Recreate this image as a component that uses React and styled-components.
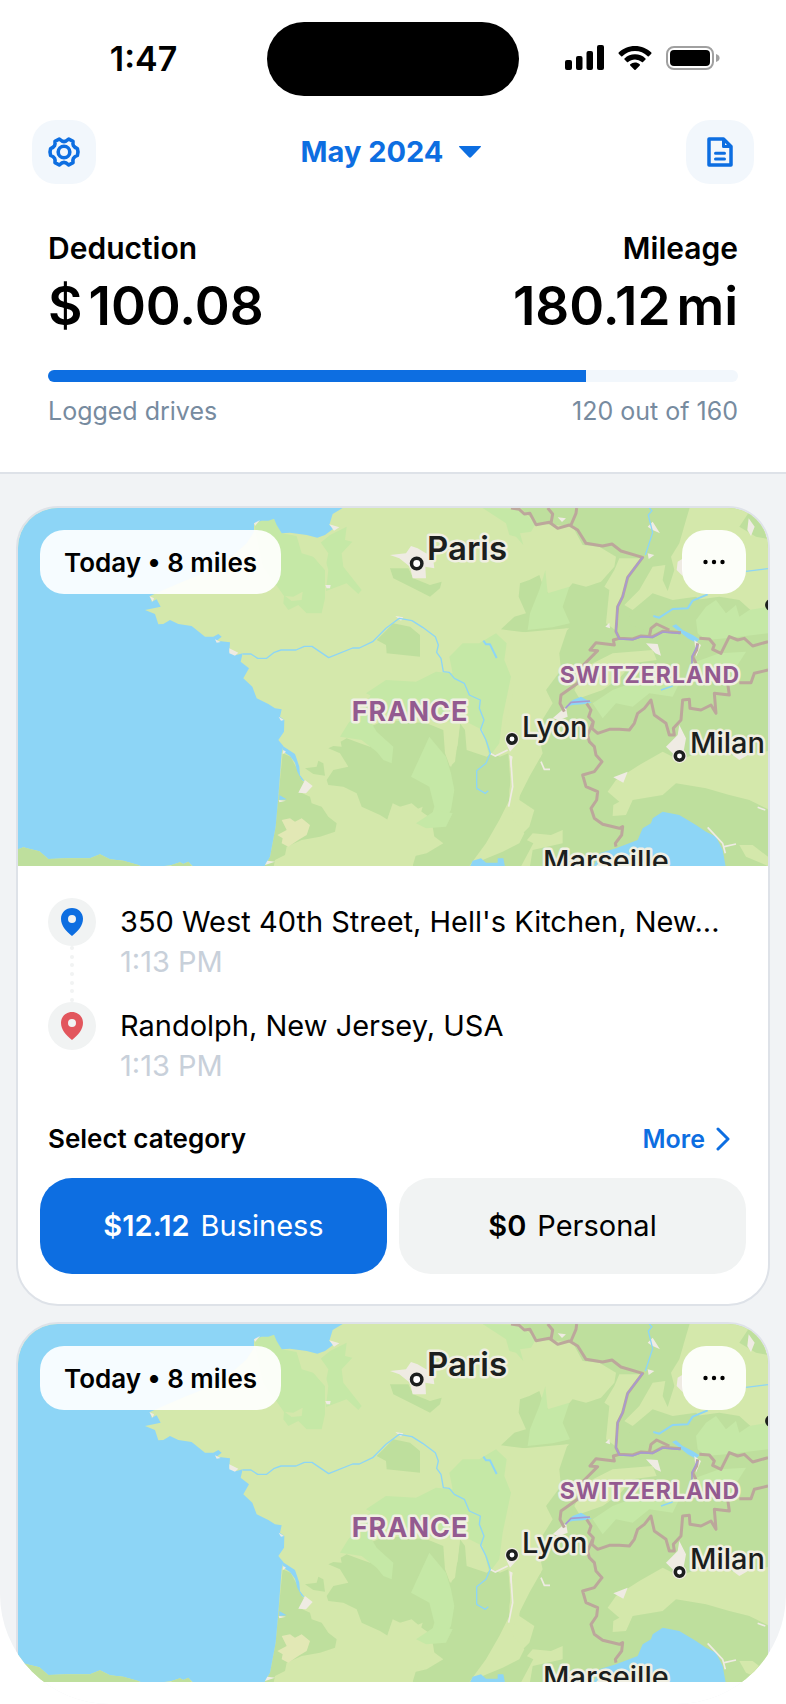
import React from "react";
import styled, { createGlobalStyle } from "styled-components";

const c = {
  blue: "#0d6ee1",
  tint: "#f2f7fc",
  page: "#f1f3f5",
  line: "#dee2e8",
  muted: "#778b9f",
  faint: "#c8d0da",
  soft: "#f1f3f3",
  red: "#e2565d",
};

const GlobalStyle = createGlobalStyle`
  * { box-sizing: border-box; }
  body { margin: 0; background: #fff; color: #000; font-family: Inter, "Liberation Sans", sans-serif; }
  button { font: inherit; color: inherit; border: 0; padding: 0; margin: 0; background: none; cursor: pointer; }
  h2, p { margin: 0; }
`;

const Screen = styled.div`
  height: 100vh;
  display: flex;
  flex-direction: column;
  overflow: hidden;
  background: ${c.page};
  border-radius: 0 0 110px 110px;
`;

const Header = styled.header`
  flex: none;
  background: #fff;
  border-bottom: 2px solid ${c.line};
`;

const StatusBar = styled.div`
  display: grid;
  grid-template-columns: 1fr 252px 1fr;
  align-items: center;
  padding-top: 22px;
`;

const Clock = styled.time`
  padding-left: 20px;
  text-align: center;
  font-size: 34px;
  line-height: 40px;
  font-weight: 600;
`;

const Island = styled.div`
  height: 74px;
  border-radius: 37px;
  background: #000;
`;

const StatusIcons = styled.div`
  display: flex;
  align-items: center;
  gap: 14px;
  padding-left: 46px;
  height: 40px;
  svg { display: block; }
`;

const NavBar = styled.nav`
  display: flex;
  align-items: center;
  justify-content: space-between;
  padding: 24px 32px 0;
`;

const NavButton = styled.button`
  display: flex;
  align-items: center;
  justify-content: center;
  width: ${(p) => (p.$wide ? 68 : 64)}px;
  height: 64px;
  border-radius: 24px;
  background: ${c.tint};
  color: ${c.blue};
`;

const MonthButton = styled.button`
  display: flex;
  align-items: center;
  gap: 16px;
  font-size: 29px;
  line-height: 40px;
  font-weight: 700;
  color: ${c.blue};
`;

const Summary = styled.section`
  padding: 44px 48px 44px;
`;

const Split = styled.div`
  display: flex;
  align-items: center;
  justify-content: space-between;
`;

const Stat = styled.div`
  display: flex;
  flex-direction: column;
  align-items: ${(p) => (p.$end ? "flex-end" : "flex-start")};
`;

const StatLabel = styled.h2`
  font-size: 30px;
  line-height: 40px;
  font-weight: 600;
`;

const StatValue = styled.p`
  display: flex;
  gap: 6px;
  font-size: 53px;
  line-height: 76px;
  font-weight: 600;
`;

const Track = styled.div`
  height: 12px;
  margin: 26px 0 12px;
  border-radius: 6px;
  overflow: hidden;
  background: ${c.tint};
`;

const Fill = styled.div`
  height: 100%;
  background: ${c.blue};
`;

const Caption = styled.p`
  font-size: 25px;
  line-height: 34px;
  color: ${c.muted};
`;

const DriveList = styled.main`
  flex: 1;
  min-height: 0;
  display: flex;
  flex-direction: column;
  gap: 16px;
  padding: 32px 16px;
  overflow-y: auto;
  scrollbar-width: none;
`;

const Card = styled.article`
  flex: none;
  border: 2px solid ${c.line};
  border-radius: 42px;
  overflow: hidden;
  background: #fff;
`;

const MapArea = styled.div`
  position: relative;
  height: 358px;
  background: #d4e8ab;
`;

const MapSvg = styled.svg`
  display: block;
  width: 100%;
  height: 100%;
`;

const MapOverlay = styled.div`
  position: absolute;
  inset: 22px 22px auto;
  display: flex;
  justify-content: space-between;
`;

const Chip = styled.p`
  padding: 2px 24px 0;
  border-radius: 24px;
  background: rgba(255, 255, 255, 0.92);
  font-size: 26px;
  line-height: 62px;
  font-weight: 600;
`;

const MenuButton = styled.button`
  display: flex;
  align-items: center;
  justify-content: center;
  width: 64px;
  height: 64px;
  border-radius: 24px;
  background: rgba(255, 255, 255, 0.92);
`;

const CardBody = styled.div`
  padding: 32px 22px 30px;
`;

const Stops = styled.ol`
  list-style: none;
  margin: 0;
  padding: 0 8px;
`;

const Stop = styled.li`
  display: grid;
  grid-template-columns: 48px minmax(0, 1fr);
  column-gap: 24px;
  height: 104px;
`;

const Rail = styled.div`
  display: flex;
  flex-direction: column;
  align-items: center;
`;

const PinBadge = styled.span`
  flex: none;
  display: flex;
  align-items: center;
  justify-content: center;
  width: 48px;
  height: 48px;
  border-radius: 50%;
  background: ${c.soft};
  color: ${(p) => p.$color};
`;

const Address = styled.p`
  font-size: 29px;
  line-height: 40px;
  padding-top: 4px;
  overflow: hidden;
  white-space: nowrap;
  text-overflow: ellipsis;
`;

const StopTime = styled.p`
  font-size: 29px;
  line-height: 40px;
  color: ${c.faint};
`;

const CategoryHead = styled.div`
  display: flex;
  align-items: center;
  justify-content: space-between;
  padding: 15px 16px 21px 8px;
`;

const CategoryTitle = styled.h2`
  font-size: 26px;
  line-height: 36px;
  font-weight: 600;
`;

const MoreButton = styled.button`
  display: flex;
  align-items: center;
  gap: 11px;
  font-size: 25px;
  line-height: 36px;
  font-weight: 600;
  color: ${c.blue};
`;

const Categories = styled.div`
  display: grid;
  grid-template-columns: 1fr 1fr;
  gap: 12px;
`;

const CategoryButton = styled.button`
  display: flex;
  align-items: center;
  justify-content: center;
  gap: 11px;
  height: 96px;
  border-radius: 32px;
  font-size: 29px;
  line-height: 40px;
  background: ${(p) => (p.$active ? c.blue : c.soft)};
  color: ${(p) => (p.$active ? "#fff" : "#000")};
`;

const Amount = styled.strong`
  font-weight: 600;
`;

const SignalIcon = () => (
  <svg width="39" height="28" viewBox="0 0 39 28" aria-hidden="true">
    <rect x="0" y="15" width="7" height="10" rx="2" />
    <rect x="11" y="11" width="6.500" height="14" rx="2" />
    <rect x="21.500" y="6" width="6.500" height="19" rx="2" />
    <rect x="32" y="0" width="7" height="25" rx="2" />
  </svg>
);

const WifiIcon = () => (
  <svg width="34" height="26" viewBox="0 0 34 26" aria-hidden="true">
    <path d="M17 0C23.500 0 29 2.400 33.300 6.600a.8.800 0 0 1 0 1.100l-2.500 2.600a.8.800 0 0 1-1.100 0A18.500 18.500 0 0 0 17 5.100c-4.800 0-9.200 1.900-12.700 5.200a.8.800 0 0 1-1.100 0L.7 7.700a.8.800 0 0 1 0-1.100C5 2.400 10.500 0 17 0Z" />
    <path d="M17 8.300c4 0 7.700 1.500 10.500 4.100.3.300.3.800 0 1.100L25 16.100c-.3.300-.8.300-1.100 0A10.300 10.300 0 0 0 17 13.400c-2.600 0-5 1-6.900 2.700-.3.300-.8.300-1.100 0l-2.500-2.600a.8.800 0 0 1 0-1.100A15.500 15.500 0 0 1 17 8.300Z" />
    <path d="M17 16.600c1.800 0 3.400.6 4.700 1.700.4.300.4.800.1 1.100l-4.200 4.300a.8.800 0 0 1-1.200 0l-4.200-4.300a.8.800 0 0 1 .1-1.100 7.200 7.200 0 0 1 4.700-1.700Z" />
  </svg>
);

const BatteryIcon = () => (
  <svg width="54" height="26" viewBox="0 0 54 26" aria-hidden="true">
    <rect x="1" y="1" width="46" height="22" rx="7" fill="none" stroke="#a0a0a0" strokeWidth="2" />
    <rect x="4" y="4" width="40" height="16" rx="4" />
    <path d="M50 8c2.400.7 3.600 2.200 3.600 4s-1.200 3.300-3.600 4Z" fill="#a0a0a0" />
  </svg>
);

const GearIcon = () => (
  <svg width="34" height="32" viewBox="0 0 34 32" fill="none" stroke="currentColor" strokeWidth="3.600" strokeLinejoin="round" aria-hidden="true">
    <path d="M12.300 3Q15 5.600 17 5.600T21.700 3L26 5.400C25.600 9 26 10.800 30.400 12.600Q31.600 16 30.400 19.400C26 21.200 25.600 23 26 26.600L21.700 29Q19 26.400 17 26.400T12.300 29L8 26.600C8.400 23 8 21.200 3.600 19.400Q2.400 16 3.600 12.600C8 10.800 8.400 9 8 5.400Z" />
    <circle cx="17" cy="16" r="5.800" />
  </svg>
);

const DocumentIcon = () => (
  <svg width="26" height="32" viewBox="0 0 26 32" fill="none" stroke="currentColor" strokeWidth="3.500" strokeLinejoin="round" aria-hidden="true">
    <path d="M2 3H16.500L24 10.500V29H2Z" />
    <path d="M16.500 3V10.500H24" strokeWidth="3" />
    <path d="M8.500 17.200H17.500M8.500 23H17.500" strokeWidth="3" strokeLinecap="round" />
  </svg>
);

const CaretIcon = () => (
  <svg width="22" height="12" viewBox="0 0 22 12" fill="currentColor" aria-hidden="true">
    <path d="M.6 0H21.400c.6 0 .8.600.4 1L12 11.300c-.6.600-1.400.600-2 0L.2 1C-.2.600 0 0 .6 0Z" />
  </svg>
);

const DotsIcon = () => (
  <svg width="22" height="6" viewBox="0 0 22 6" aria-hidden="true">
    <circle cx="2.500" cy="3" r="2.200" />
    <circle cx="11" cy="3" r="2.200" />
    <circle cx="19.500" cy="3" r="2.200" />
  </svg>
);

const PinIcon = () => (
  <svg width="22" height="28" viewBox="0 0 22 28" fill="currentColor" fillRule="evenodd" aria-hidden="true">
    <path d="M11 0c6.200 0 11 4.700 11 10.800C22 17.500 17.500 23 11 28 4.500 23 0 17.500 0 10.800 0 4.700 4.800 0 11 0Zm0 7a4 4 0 1 0 0 8 4 4 0 0 0 0-8Z" />
  </svg>
);

const DottedLine = () => (
  <svg width="4" height="56" viewBox="0 0 4 56" fill={c.soft} aria-hidden="true">
    {[2, 11, 19, 28, 37, 45, 54].map((y) => (
      <circle key={y} cx="2" cy={y} r="2" />
    ))}
  </svg>
);

const ChevronIcon = () => (
  <svg width="14" height="24" viewBox="0 0 14 24" fill="none" stroke="currentColor" strokeWidth="3" strokeLinecap="round" strokeLinejoin="round" aria-hidden="true">
    <path d="M2 2 12 12 2 22" />
  </svg>
);

const towns = [
  { name: "Paris", x: 409, y: 52, size: 33, dotX: 398.700, dotY: 55.500, r: 5.200 },
  { name: "Lyon", x: 504, y: 229, size: 29, dotX: 494, dotY: 231, r: 4.200 },
  { name: "Milan", x: 672, y: 245, size: 29, dotX: 661.500, dotY: 248, r: 4.200 },
  { name: "Marseille", x: 525, y: 363, size: 29 },
];

const countries = [
  { name: "FRANCE", x: 392, y: 213, size: 27 },
  { name: "SWITZERLAND", x: 632, y: 175, size: 23 },
];

function DriveMap() {
  return (
    <MapSvg viewBox="0 0 750 358" preserveAspectRatio="xMidYMid slice" role="img" aria-label="Map of France and Switzerland">
      <g transform="translate(-18 -18) scale(0.33333)">
        {/* western France */}
        <g fill="#bedf9d">
          <path d="M848 790 872 800 890 835 905 870 915 880 897 905 930 920 935 940 965 950 985 980 1010 1000 1005 1025 960 1040 905 1050 860 1070 855 1095 825 1110 820 1135H790L810 1100 827 1010 835 920Z" />
          <path d="M985 775 1000 768 1025 770 1022 755 1040 745 1080 760 1110 770 1120 730 1110 710 1158 690 1280 700 1330 720 1335 790 1350 830 1365 815 1380 700 1395 720 1400 780 1460 800 1475 790 1500 800 1525 790 1533 900 1523 960 1505 985 1495 1030 1540 1060 1560 1040 1600 1060 1560 1135H1240L1235 1100 1280 1090 1330 1060 1290 1030 1300 990 1265 965 1235 940 1200 950 1180 1000 1190 1015 1180 1035 1160 1010 1180 1000 1140 975 1085 950 1070 910 1030 890 985 885 980 870 1000 840 1045 830 1020 790Z" />
          <path d="M915 835 950 830 955 812 970 820 975 857 940 852Z" />
          <path d="M1130 450 1155 425 1180 400 1230 410 1260 435 1260 500 1160 490 1158 465Z" />
          <path d="M1170 235 1225 235 1240 265 1290 285 1325 275 1320 295 1290 320 1240 295 1180 265Z" />
        </g>
        <path fill="#e2e8b5" d="M845 990 870 985 885 995 905 985 930 1005 920 1035 895 1050 865 1070 845 1060 848 1045 832 1035 860 1020Z" />
        <g fill="#c5e8a6">
          <path d="M762 100 785 92 822 86 845 130 890 138 905 170 945 205 975 240 975 325 965 370 920 370 895 345 865 360 850 340 852 318 790 230Z" />
          <path d="M960 160 990 135 1040 110 1035 150 1057 155 1025 190 1030 230 1085 300 1075 312 1040 280 978 303 985 240 975 205Z" />
          <path d="M1020 740 1045 700 1100 640 1120 600 1180 590 1210 640 1115 700 1130 725 1180 770 1175 820 1150 810 1130 785 1085 750Z" />
        </g>
        <path fill="#d4e8ab" d="M855 318 880 320 908 305 905 330 875 333ZM890 138 950 140 985 190 975 240 940 200 905 190Z" />

        {/* eastern France, Alps, Italy */}
        <g transform="translate(1158 0)">
          <path fill="#bedf9d" d="M390 40H1160V1140H430L440 1080 530 1060 530 1020 495 1035 440 1030 415 1060 400 1040 430 1010 445 960 400 930 405 860 465 800 450 720 500 640 480 600 505 540 500 460 550 415 440 430 345 418 385 380 420 370 398 320 402 280 430 270 460 255 475 300 515 330 560 280 600 290 645 275 685 230 690 200 640 170 590 165 560 110 450 100Z" />
          <g fill="#d4e8ab">
            <path d="M915 40H1160V420L1060 330 1000 320 890 335 830 350 740 360 715 345 760 300 800 230 838 225 830 270 845 303 865 240 855 200 880 160 900 90Z" />
            <path d="M700 205 770 205 725 260 700 340 695 425 660 400 670 300 655 290 685 240Z" />
            <path d="M565 600 600 530 680 490 800 480 812 510 740 520 700 565 650 600 580 625Z" />
            <path d="M665 905 690 870 760 825 830 785 880 810 960 780 1060 800 1160 780V965L1090 930 1030 915 960 895 870 880 830 915 740 930 720 975 680 978 682 945 700 935Z" />
            <path d="M0 1000 20 940 75 965 110 950 100 985 140 1010 145 1040 100 1060 80 1128 0 1135Z" />
            <path d="M180 700 222 700 215 765 195 832 178 770Z" />
            <path d="M340 760 380 620 360 480 380 430 545 415 520 490 525 540 480 600 490 650 450 700 470 790 430 860 395 930 375 980 415 1030 400 1060 350 1085 290 1110 250 1128 300 1060 340 990 370 930 370 900 385 800Z" />
            <path d="M1060 1065 1100 1065 1146 1100V1128L1080 1100Z" />
          </g>
          <g fill="#bedf9d">
            <path d="M740 360 800 310 860 330 930 320 960 345 930 430 800 430 720 400Z" />
            <path d="M1060 110 1100 50H1160V150L1110 140Z" />
          </g>
          <g fill="#c5e8a6">
            <path d="M290 54 400 56 450 100 435 125 402 130 412 165 390 140 370 135 360 100Z" />
            <path d="M425 420 432 370 460 300 478 240 485 310 550 290 530 350 552 400 500 412Z" />
            <path d="M190 500 230 460 280 460 330 430 362 460 355 510 375 560 350 680 340 760 310 800 290 720 250 700 130 690 0 640-60 610 0 570 90 575 150 545 200 550Z" />
            <path d="M75 860 130 740 180 800 195 850 205 900 195 960 165 1010 130 1000 145 950 130 890Z" />
            <path d="M935 430 930 390 960 350 990 330 1020 370 1050 345 1060 380 1090 360 1146 350V430L1060 440 1020 445 960 450Z" />
            <path d="M620 640 680 600 760 570 880 580 860 620 790 610 740 650 690 640 650 685Z" />
            <path d="M930 515 1000 490 1080 485 1055 525 1000 530 985 570 940 545Z" />
            <path d="M90 1000 150 960 200 970 180 1010 120 1015Z" />
          </g>
          <g fill="#8dd5f6">
            <path d="M620 1135 640 1090 690 1075 755 1050 770 1015 795 1000 800 985 830 965 880 975 930 1005 960 1025 990 1040 1010 1080 1020 1135Z" />
            <path d="M250 1135 260 1112 285 1105 300 1118 335 1118 335 1105 352 1105 358 1135Z" />
            <path d="M858 408 870 403 890 420 920 435 940 448 930 458 905 445 885 428Z" />
            <path d="M540 650 560 630 585 620 617 638 590 643 560 645Z" />
          </g>
          <g fill="#efebe3">
            <path d="M12 195 60 190 75 168 95 175 120 190 140 195 145 235 118 230 120 265 80 265 72 230 40 205Z" />
            <path d="M28 378 52 382 45 392Z" />
            <path d="M785 190 805 195 788 207ZM785 110 800 95 822 130 800 120ZM1088 85 1106 110 1095 138 1084 120ZM875 215 892 205 890 258 872 240Z" />
            <path d="M780 460 815 462 825 497 808 490ZM840 770 875 735 880 705 900 745 890 800 865 795ZM682 862 725 845 712 878ZM500 685 540 650 545 680 520 690ZM515 82 540 85 528 96ZM658 410 670 398 672 415ZM1040 795 1095 790 1060 810ZM925 450 945 465 930 500ZM370 795 380 800 374 835ZM360 760 395 760 372 785Z" />
          </g>
          <g fill="none" stroke="#efebe3" strokeWidth="5">
            <path d="M312 790 328 798 365 780M374 800 380 890 368 950M465 815 475 838 492 838M965 1012 1010 1060 1018 1090M1015 1070 1050 1062M1115 952 1138 960" />
          </g>
          <g fill="none" stroke="#8dd5f6" strokeWidth="4" strokeLinejoin="round">
            <path d="M-430 492-405 492-385 505-358 505-335 487-315 480-270 480-245 469-222 469-172 503-100 474-80 474-40 455 0 415 40 385 78 392 110 412 148 440 157 465 152 487 165 505 172 545 190 547 205 565 235 580 250 615 283 630 280 655 294 690 284 718 300 750 313 790 300 820 272 842V895L298 910 307 902" />
            <path d="M790 54 798 62 787 75 800 128 778 195M1080 244 1146 236M825 600 860 588" />
            <path d="M802 378 820 383 860 357 905 355 920 332 965 313M292 452 300 463 312 463 332 504" strokeWidth="6" />
          </g>
          <g fill="none" stroke="#bca79b" strokeWidth="9" strokeLinejoin="round">
            <path d="M375 54 400 58 415 72 432 70 450 104 490 97 515 115 550 105 575 120 600 160 650 168 678 162 705 183 770 202 725 262 710 320 695 350 690 425 700 445 740 447 765 438 800 440 830 424 885 428" />
            <path d="M485 54 500 72 495 100M572 54 570 70 555 105M700 445 682 450 685 465 630 458 612 480 635 482 592 525 575 580 525 615 522 640 535 665M790 440 795 415 812 402 850 420M940 445 970 447 985 465 980 478 1005 490 1030 440 1055 450 1075 445 1100 468 1146 455" />
            <path d="M602 640 615 660 608 680 622 695 618 715 635 730 670 718 700 718 730 720 745 700 755 670 775 655 795 630 805 675 840 700 850 735 865 735 862 715 885 690 890 630 910 628 912 655 945 660 975 645 990 670 985 610 1030 615 1025 580M1060 578 1095 578 1105 550 1146 540M622 695 605 735 610 755 625 770 630 795 648 815 625 845 590 855 600 890 635 905 632 930 615 955 625 985 650 1003 700 1015 710 1010 707 1035 688 1060 690 1070" />
            <path d="M935 460 932 480 920 500 930 520" />
          </g>
          <g fill="none" stroke="#a79ad0" strokeWidth="5" strokeLinejoin="round">
            <path d="M770 202 725 262 710 320 695 350 690 425 700 447 740 449 765 440 800 442 830 426 882 430M935 465 918 500V525M538 655 555 637 612 633" />
          </g>
        </g>

        {/* Atlantic, Channel and the Spanish coast */}
        <path fill="#8dd5f6" d="M40 40H1050L1028 54 998 72 988 105 1002 115 975 135 952 143 920 135 870 128 845 130 830 105 822 86 805 92 785 92 762 100V125L740 160 660 230 560 270 490 300 450 318 455 335 470 328 482 350 435 360 465 372 475 403 490 402 510 390 535 402 575 408 615 440 640 440 655 432 665 440 650 452 690 457 688 485 710 495 728 490 722 515 747 535 730 565 757 590 770 625 805 642 825 655 845 658 840 680 853 690 852 725 835 750 850 768 845 790 835 920 827 1010 810 1100 790 1135H585L565 1115 550 1122 540 1117 515 1125 440 1135 415 1125 370 1112 330 1108 300 1093 270 1105 200 1105 145 1107 118 1084 90 1077 70 1072 54 1078 40 1080Z" />
        <path fill="#bedf9d" d="M40 1080 54 1078 70 1072 90 1077 118 1084 145 1107 200 1105 270 1105 300 1093 330 1108 370 1112 415 1125 440 1140H40ZM510 1140 515 1125 540 1117 550 1122 565 1115 585 1140Z" />
        <path fill="#8dd5f6" d="M848 768 885 792 898 830 900 855 915 875 905 870 892 845 885 818 870 798 850 785ZM838 915 860 928 838 930Z" />
        <path fill="#efebe3" d="M915 870 938 888 918 910 895 908ZM988 103 1018 112 1002 122ZM688 475 715 488 705 497 688 490ZM836 680 852 690 843 692ZM836 930 858 932 838 937ZM645 448 662 456 650 458ZM850 780 858 785 848 793ZM976 285 992 285 990 295 980 295ZM448 318 462 325 458 335ZM762 100 780 90 765 108ZM802 1112 825 1115 795 1125Z" />
      </g>

      {countries.map((l) => (
        <text key={l.name} x={l.x} y={l.y} textAnchor="middle" fontSize={l.size} fontWeight="700" fill="#935a90" stroke="#f0efe2" strokeWidth="5" strokeLinejoin="round" paintOrder="stroke" letterSpacing="1">
          {l.name}
        </text>
      ))}
      {towns.map((t) => (
        <g key={t.name}>
          {t.r && (
            <>
              <circle cx={t.dotX} cy={t.dotY} r={t.r + 3} fill="#efebe3" />
              <circle cx={t.dotX} cy={t.dotY} r={t.r} fill="#fff" stroke="#1c1f1e" strokeWidth="3.500" />
            </>
          )}
          <text x={t.x} y={t.y} fontSize={t.size} fontWeight={t.size > 30 ? 600 : 500} fill="#1c1f1e" stroke="#f0efe2" strokeWidth="5" strokeLinejoin="round" paintOrder="stroke">
            {t.name}
          </text>
        </g>
      ))}
      <circle cx="753" cy="97" r="4.200" fill="#fff" stroke="#1c1f1e" strokeWidth="3.500" />
    </MapSvg>
  );
}

const drives = [
  {
    id: 1,
    label: "Today • 8 miles",
    from: "350 West 40th Street, Hell's Kitchen, New...",
    to: "Randolph, New Jersey, USA",
    time: "1:13 PM",
    business: "$12.12",
    personal: "$0",
  },
  {
    id: 2,
    label: "Today • 8 miles",
    from: "350 West 40th Street, Hell's Kitchen, New...",
    to: "Randolph, New Jersey, USA",
    time: "1:13 PM",
    business: "$12.12",
    personal: "$0",
  },
];

function DriveCard({ drive }) {
  return (
    <Card>
      <MapArea>
        <DriveMap />
        <MapOverlay>
          <Chip>{drive.label}</Chip>
          <MenuButton type="button" aria-label="Drive options">
            <DotsIcon />
          </MenuButton>
        </MapOverlay>
      </MapArea>
      <CardBody>
        <Stops>
          <Stop>
            <Rail>
              <PinBadge $color={c.blue}><PinIcon /></PinBadge>
              <DottedLine />
            </Rail>
            <div>
              <Address>{drive.from}</Address>
              <StopTime>{drive.time}</StopTime>
            </div>
          </Stop>
          <Stop>
            <Rail>
              <PinBadge $color={c.red}><PinIcon /></PinBadge>
            </Rail>
            <div>
              <Address>{drive.to}</Address>
              <StopTime>{drive.time}</StopTime>
            </div>
          </Stop>
        </Stops>
        <CategoryHead>
          <CategoryTitle>Select category</CategoryTitle>
          <MoreButton type="button">
            More
            <ChevronIcon />
          </MoreButton>
        </CategoryHead>
        <Categories>
          <CategoryButton type="button" $active aria-pressed="true">
            <Amount>{drive.business}</Amount>
            <span>Business</span>
          </CategoryButton>
          <CategoryButton type="button" aria-pressed="false">
            <Amount>{drive.personal}</Amount>
            <span>Personal</span>
          </CategoryButton>
        </Categories>
      </CardBody>
    </Card>
  );
}

export default function App() {
  const progress = 78;
  return (
    <>
      <GlobalStyle />
      <Screen>
        <Header>
          <StatusBar>
            <Clock>1:47</Clock>
            <Island />
            <StatusIcons>
              <SignalIcon />
              <WifiIcon />
              <BatteryIcon />
            </StatusIcons>
          </StatusBar>
          <NavBar>
            <NavButton type="button" aria-label="Settings"><GearIcon /></NavButton>
            <MonthButton type="button">
              May 2024
              <CaretIcon />
            </MonthButton>
            <NavButton type="button" $wide aria-label="Reports"><DocumentIcon /></NavButton>
          </NavBar>
          <Summary>
            <Split>
              <Stat>
                <StatLabel>Deduction</StatLabel>
                <StatValue><span>$</span><span>100.08</span></StatValue>
              </Stat>
              <Stat $end>
                <StatLabel>Mileage</StatLabel>
                <StatValue><span>180.12</span><span>mi</span></StatValue>
              </Stat>
            </Split>
            <Track role="progressbar" aria-label="Logged drives" aria-valuenow={progress} aria-valuemin={0} aria-valuemax={100}>
              <Fill style={{ width: `${progress}%` }} />
            </Track>
            <Split>
              <Caption>Logged drives</Caption>
              <Caption>120 out of 160</Caption>
            </Split>
          </Summary>
        </Header>
        <DriveList>
          {drives.map((d) => (
            <DriveCard key={d.id} drive={d} />
          ))}
        </DriveList>
      </Screen>
    </>
  );
}
